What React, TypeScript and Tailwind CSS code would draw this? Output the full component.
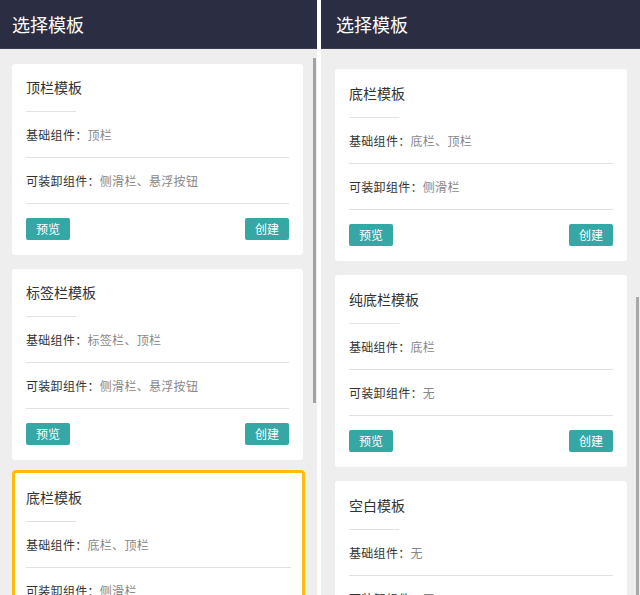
import React from "react";

type Tpl = { title: string; base: string; extra: string };

const font = { fontFamily: '"Noto Sans CJK SC", "Noto Sans", sans-serif' };

function Card({ t, active = false, tall = false }: { t: Tpl; active?: boolean; tall?: boolean }) {
  return (
    <div
      className={
        active
          ? "bg-white rounded-[4px] border-[3px] border-[#fdbd0a] px-[11px] pt-[13px] pb-[12px] w-[293px] mt-[10px]"
          : tall
          ? "bg-white rounded-[3px] px-[14px] pt-[13px] pb-[15px] mt-[14px] first:mt-0"
          : "bg-white rounded-[3px] px-[14px] pt-[12px] pb-[15px] mt-[14px] first:mt-0"
      }
    >
      <div className="text-[14px] leading-[22px] text-[#333]">{t.title}</div>
      <div className="mt-[13px] h-px w-[50px] bg-[#e3e3e3]" />
      <div className="h-[46px] flex items-center border-b border-[#e0e0e0] text-[12px] tracking-[0.3px] pt-[1px]">
        <span className="text-[#333]">基础组件：</span>
        <span className="text-[#888]">{t.base}</span>
      </div>
      <div className="h-[46px] flex items-center border-b border-[#e0e0e0] text-[12px] tracking-[0.3px] pt-[1px]">
        <span className="text-[#333]">可装卸组件：</span>
        <span className="text-[#888]">{t.extra}</span>
      </div>
      <div className="mt-[14px] flex justify-between">
        <button className="w-[44px] h-[22px] rounded-[2px] bg-[#35a8a6] text-white text-[12px] leading-[22px]">
          预览
        </button>
        <button className="w-[44px] h-[22px] rounded-[2px] bg-[#35a8a6] text-white text-[12px] leading-[22px]">
          创建
        </button>
      </div>
    </div>
  );
}

const left: Tpl[] = [
  { title: "顶栏模板", base: "顶栏", extra: "侧滑栏、悬浮按钮" },
  { title: "标签栏模板", base: "标签栏、顶栏", extra: "侧滑栏、悬浮按钮" },
];
const yellow: Tpl = { title: "底栏模板", base: "底栏、顶栏", extra: "侧滑栏" };
const right: Tpl[] = [
  { title: "底栏模板", base: "底栏、顶栏", extra: "侧滑栏" },
  { title: "纯底栏模板", base: "底栏", extra: "无" },
  { title: "空白模板", base: "无", extra: "无" },
];

function Header({ pl }: { pl: string }) {
  return (
    <div
      className={`h-[49px] shrink-0 bg-[#2b2d42] border-b border-[#3a3c50] flex items-center text-white text-[18px] ${pl}`}
    >
      选择模板
    </div>
  );
}

export default function App() {
  return (
    <div className="w-[640px] h-[595px] flex bg-white overflow-hidden" style={font}>
      <div className="w-[317px] flex flex-col">
        <Header pl="pl-[12px]" />
        <div className="relative flex-1 bg-[#eeeeee] overflow-hidden pl-[12px] pt-[15px]">
          <div className="w-[291px]">
            {left.map((t) => (
              <Card key={t.title} t={t} />
            ))}
          </div>
          <Card t={yellow} active />
          <div className="absolute left-[313px] top-[9px] w-[3px] h-[345px] bg-[#a2a2a2]" />
        </div>
      </div>
      <div className="w-[4px] bg-white" />
      <div className="flex-1 flex flex-col">
        <Header pl="pl-[15px]" />
        <div className="relative flex-1 bg-[#eeeeee] overflow-hidden pl-[14px] pt-[20px]">
          <div className="w-[292px]">
            {right.map((t) => (
              <Card key={t.title} t={t} tall />
            ))}
          </div>
          <div className="absolute left-[315px] top-[248px] w-[3px] h-[400px] bg-[#a8a8a8]" />
        </div>
      </div>
    </div>
  );
}
